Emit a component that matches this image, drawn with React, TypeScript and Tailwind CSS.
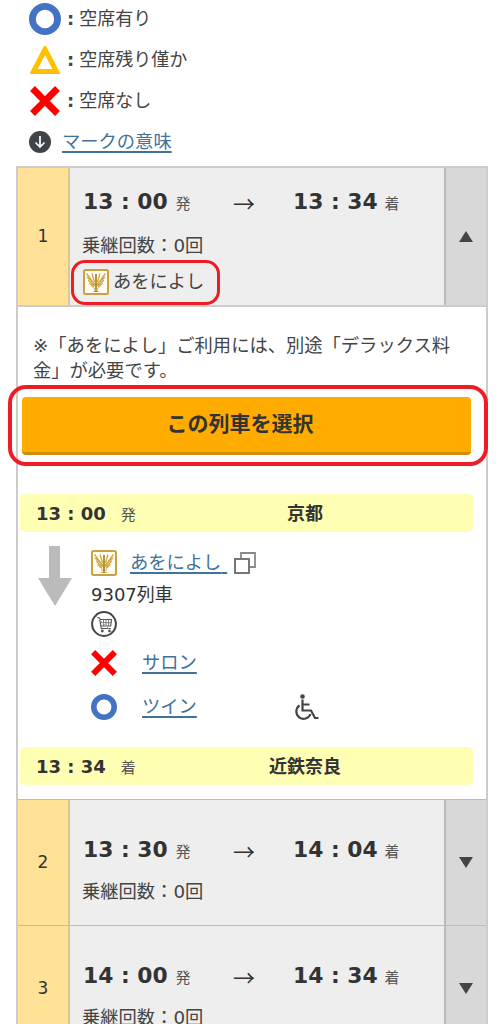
function Circle({ size = 26 }: { size?: number }) {
  return (
    <svg width={size} height={size} viewBox="0 0 32 32" className="shrink-0">
      <circle cx="16" cy="16" r="12.6" fill="none" stroke="#4472c4" strokeWidth="6.8" />
    </svg>
  );
}

function Triangle() {
  return (
    <svg width="30" height="28" viewBox="0 0 30 28" className="shrink-0">
      <path d="M15 3.500 3.500 25.500h23Z" fill="none" stroke="#ffc000" strokeWidth="5" />
    </svg>
  );
}

function Cross({ size = 30 }: { size?: number }) {
  return (
    <svg width={size} height={size} viewBox="0 0 30 30" className="shrink-0">
      <path d="M2.500 2.500 27.500 27.500M27.500 2.500 2.500 27.500" stroke="#ff0000" strokeWidth="6.800" />
    </svg>
  );
}

function Logo() {
  return (
    <svg width="26" height="26" viewBox="0 0 26 26" className="shrink-0">
      <rect x="1" y="1" width="24" height="24" rx="1.500" fill="#fffdf5" stroke="#c9a23f" strokeWidth="2" />
      <g fill="none" stroke="#cfa843" strokeWidth="1.300">
        <path d="M12 16 3.500 4.500M12 15 4 8M11.500 17 5 11M11 18.500 6.500 14.500" />
        <path d="M14 16 22.500 4.500M14 15 22 8M14.500 17 21 11M15 18.500 19.500 14.500" />
        <path d="M11.500 13 9 4.500M14.500 13 17 4.500" />
      </g>
      <path d="M13 5v18" stroke="#b8923a" strokeWidth="2" />
      <path d="M10.500 20h5M10.500 22.500h5" stroke="#b8923a" strokeWidth="1.200" />
    </svg>
  );
}

function NoShop() {
  return (
    <svg width="26" height="26" viewBox="0 0 26 26" className="shrink-0">
      <circle cx="13" cy="13" r="11.900" fill="none" stroke="#444" strokeWidth="2" />
      <path d="M6 6.500 8.500 7l1.800 10.500h9.500M8.800 8.500h11.700l-.8 6.500H10" fill="none" stroke="#555" strokeWidth="1.200" />
      <path d="M12.500 8.500v6.500M15 8.500v6.500M17.500 8.500v6.500M9.500 11.700h10.500" stroke="#666" strokeWidth="0.800" />
      <circle cx="11.300" cy="20" r="1.400" fill="#555" />
      <circle cx="18.500" cy="20" r="1.400" fill="#555" />
      <path d="M5 5 21 21" stroke="#aaa" strokeWidth="1" />
    </svg>
  );
}

function Wheelchair() {
  return (
    <svg width="26" height="27" viewBox="0 0 26 27" className="shrink-0">
      <circle cx="9.500" cy="2.500" r="2.300" fill="#444" />
      <path d="M9.500 5.500v11h8.500l4 7.500h3.500M9.500 10.500h7" fill="none" stroke="#444" strokeWidth="2.200" />
      <path d="M6.500 11.500a7.300 7.300 0 1 0 11 8.500" fill="none" stroke="#444" strokeWidth="2.200" />
    </svg>
  );
}

function Row({
  no,
  dep,
  arr,
  open,
  first,
}: {
  no: number;
  dep: string;
  arr: string;
  open?: boolean;
  first?: boolean;
}) {
  return (
    <div className={`flex bg-[#eee] ${first ? "h-[137px]" : "h-[126px] border-t border-[#bbb]"}`}>
      <div className="flex w-[52px] shrink-0 items-center justify-center border-r-2 border-[#dcc88f] bg-[#ffe197] text-[17px] text-[#333]">
        {no}
      </div>
      <div className={`min-w-0 flex-1 pl-[12px] ${first ? "pt-[16px]" : "pt-[32px]"}`}>
        <div className="flex h-[36px] items-center">
          <div className="flex w-[151px] items-baseline pl-[1px]">
            <span className="text-[21.800px] font-bold text-[#333]">{dep}</span>
            <span className="ml-[8px] text-[15px] text-[#555]">発</span>
          </div>
          <div className="w-[60px] font-['Noto_Sans_CJK_JP'] text-[22px] leading-none text-[#333]">→</div>
          <div className="flex items-baseline">
            <span className="text-[21.800px] font-bold text-[#333]">{arr}</span>
            <span className="ml-[7px] text-[15px] text-[#555]">着</span>
          </div>
        </div>
        <div className={`${first ? "mt-[13px]" : "mt-[11px]"} h-[25px] text-[18.300px] leading-[25px] text-[#444]`}>
          乗継回数：0回
        </div>
        {first && (
          <div className="relative mt-[11px] ml-[1px] flex items-center gap-[4px]">
            <Logo />
            <span className="text-[18.300px] leading-[26px] text-[#444]">あをによし</span>
            <div className="absolute -top-[9px] left-[-12px] h-[45px] w-[149px] rounded-[14px] border-[3.500px] border-[#ee1c25]" />
          </div>
        )}
      </div>
      <div className="flex w-[42px] shrink-0 items-center justify-center border-l-2 border-[#bbb] bg-[#d8d8d8]">
        {open ? (
          <div className="h-0 w-0 border-x-[7px] border-b-[11px] border-x-transparent border-b-[#444]" />
        ) : (
          <div className="h-0 w-0 border-x-[7px] border-t-[11px] border-x-transparent border-t-[#444]" />
        )}
      </div>
    </div>
  );
}

function StationBar({ time, mark, name }: { time: string; mark: string; name: string }) {
  return (
    <div className="flex h-[38px] w-[453px] items-center rounded-[5px] bg-[#ffffb3] text-[#333]">
      <div className="flex w-[190px] items-baseline pl-[16px]">
        <span className="text-[18px] font-bold">{time}</span>
        <span className="ml-[15px] text-[15px] text-[#555]">{mark}</span>
      </div>
      <div className="w-[190px] text-center text-[18px] font-bold">{name}</div>
    </div>
  );
}

export default function App() {
  return (
    <div className="h-[1024px] overflow-hidden bg-white font-['DejaVu_Sans','Noto_Sans_CJK_JP',sans-serif] text-[18px] text-[#444]">
      <div className="-mt-[2px] pl-[29px]">
        <div className="flex h-[41px] items-center">
          <Circle size={32} />
          <span className="ml-[6px] font-bold">:</span>
          <span className="ml-[5px]">空席有り</span>
        </div>
        <div className="flex h-[41px] items-center pl-[1px]">
          <Triangle />
          <span className="ml-[7px] font-bold">:</span>
          <span className="ml-[5px]">空席残り僅か</span>
        </div>
        <div className="flex h-[41px] items-center pl-[1px]">
          <Cross />
          <span className="ml-[7px] font-bold">:</span>
          <span className="ml-[5px]">空席なし</span>
        </div>
        <div className="flex h-[41px] items-center">
          <svg width="22" height="22" viewBox="0 0 22 22" className="shrink-0">
            <circle cx="11" cy="11" r="11" fill="#3f4448" />
            <path d="M11 5v11M6.500 11.500 11 16l4.500-4.500" fill="none" stroke="#fff" strokeWidth="1.700" />
          </svg>
          <a className="ml-[11px] text-[18.300px] text-[#41729b] underline decoration-2 underline-offset-[3px]">マークの意味</a>
        </div>
      </div>

      <div className="mt-[4px] ml-[16px] w-[472px] border-x-2 border-t-2 border-[#ccc]">
        <Row no={1} dep="13 : 00" arr="13 : 34" open first />
        <div className="border-t-2 border-[#ccc] pt-[26px] pb-[14px]">
          <p className="pr-[10px] pl-[15px] text-[18.300px] leading-[25px]">
            ※「あをによし」ご利用には、別途「デラックス料金」が必要です。
          </p>
          <div className="relative mt-[14px] ml-[4px] w-[449px]">
            <button className="h-[58px] w-full rounded-[4px] border-b-[3px] border-[#d18d0a] bg-[#ffab00] pr-[13px] text-[21px] font-bold text-[#333]">
              この列車を選択
            </button>
            <div className="absolute -top-[12px] -right-[17px] -bottom-[11px] -left-[14px] rounded-[18px] border-4 border-[#ee1c25]" />
          </div>

          <div className="mt-[39px] ml-[2px]">
            <StationBar time="13 : 00" mark="発" name="京都" />
            <div className="flex pt-[14px] pl-[18px]">
              <svg width="34" height="60" viewBox="0 0 34 60" className="shrink-0">
                <path d="M11 0h11v32h12L17 60 0 32h11Z" fill="#bbb" />
              </svg>
              <div className="ml-[19px] flex-1">
                <div className="flex h-[34px] items-center">
                  <Logo />
                  <a className="ml-[13px] text-[18.300px] text-[#41729b] underline decoration-2 underline-offset-[3px]">
                    あをによし{"\u00a0"}
                  </a>
                  <svg width="22" height="22" viewBox="0 0 22 22" className="ml-[7px] shrink-0">
                    <path d="M7 7V1h14v14h-6" fill="none" stroke="#888" strokeWidth="1.800" />
                    <rect x="1" y="7" width="14" height="14" fill="#fff" stroke="#777" strokeWidth="2" />
                  </svg>
                </div>
                <div className="mt-[1px] h-[28px] leading-[28px] text-[#333]">9307列車</div>
                <div className="mt-[2px]">
                  <NoShop />
                </div>
                <div className="mt-[13px] flex h-[26px] items-center">
                  <div className="flex w-[51px] shrink-0">
                    <Cross size={26} />
                  </div>
                  <a className="text-[18.300px] text-[#41729b] underline decoration-2 underline-offset-[3px]">サロン</a>
                </div>
                <div className="mt-[18px] flex h-[26px] items-center">
                  <div className="flex w-[51px] shrink-0">
                    <Circle />
                  </div>
                  <a className="w-[151px] text-[18.300px] text-[#41729b] underline decoration-2 underline-offset-[3px]">ツイン</a>
                  <Wheelchair />
                </div>
              </div>
            </div>
            <div className="mt-[27px]">
              <StationBar time="13 : 34" mark="着" name="近鉄奈良" />
            </div>
          </div>
        </div>
        <Row no={2} dep="13 : 30" arr="14 : 04" />
        <Row no={3} dep="14 : 00" arr="14 : 34" />
      </div>
    </div>
  );
}
